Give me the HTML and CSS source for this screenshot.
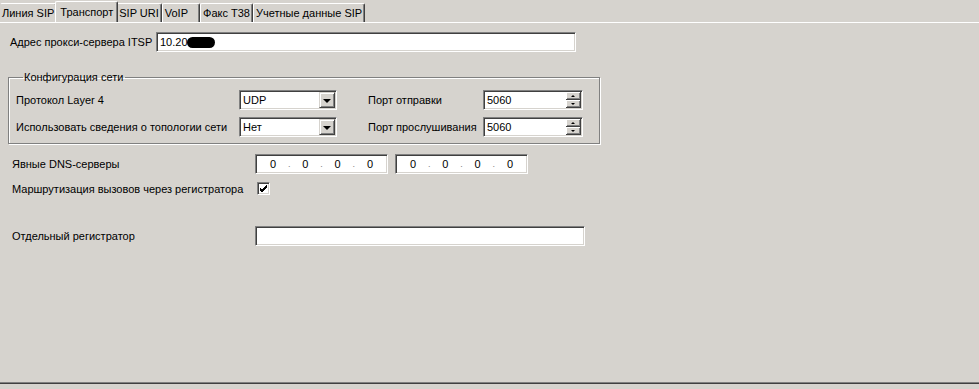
FILE: index.html
```html
<!DOCTYPE html>
<html>
<head>
<meta charset="utf-8">
<link rel="stylesheet" href="styles.css">
</head>
<body>
<div class="window">
  <div class="tabs">
    <div class="tab">Линия SIP</div>
    <div class="tab active">Транспорт</div>
    <div class="tab">SIP URI</div>
    <div class="tab tab-voip">VoIP</div>
    <div class="tab">Факс T38</div>
    <div class="tab">Учетные данные SIP</div>
  </div>
  <div class="panel">
    <div class="row proxy-row">
      <span class="lbl proxy-lbl">Адрес прокси-сервера ITSP</span>
      <div class="field proxy-field"><span class="val">10.20</span><span class="blot"></span></div>
    </div>

    <fieldset class="group">
      <legend>Конфигурация сети</legend>
      <div class="grid">
        <span class="lbl">Протокол Layer 4</span>
        <div class="field combo"><span class="val">UDP</span><span class="dropbtn"><span class="tri-down"></span></span></div>
        <span class="lbl port-lbl">Порт отправки</span>
        <div class="field spin"><span class="val">5060</span><span class="spinbtns"><span class="sbtn"><span class="tri-up"></span></span><span class="sbtn"><span class="tri-dn"></span></span></span></div>

        <span class="lbl">Использовать сведения о топологии сети</span>
        <div class="field combo"><span class="val">Нет</span><span class="dropbtn"><span class="tri-down"></span></span></div>
        <span class="lbl port-lbl">Порт прослушивания</span>
        <div class="field spin"><span class="val">5060</span><span class="spinbtns"><span class="sbtn"><span class="tri-up"></span></span><span class="sbtn"><span class="tri-dn"></span></span></span></div>
      </div>
    </fieldset>

    <div class="row dns-row">
      <span class="lbl wide-lbl">Явные DNS-серверы</span>
      <div class="field ip"><span>0</span><i>.</i><span>0</span><i>.</i><span>0</span><i>.</i><span>0</span></div>
      <div class="field ip"><span>0</span><i>.</i><span>0</span><i>.</i><span>0</span><i>.</i><span>0</span></div>
    </div>

    <div class="row chk-row">
      <span class="lbl chk-lbl">Маршрутизация вызовов через регистратора</span>
      <span class="checkbox"><svg width="9" height="9" viewBox="0 0 9 9"><path d="M1 4 L3 6 L8 1 M1 5 L3 7 L8 2 M1 6 L3 8 L8 3" stroke="#000" stroke-width="1" fill="none"/></svg></span>
    </div>

    <div class="row reg-row">
      <span class="lbl wide-lbl">Отдельный регистратор</span>
      <div class="field reg-field"></div>
    </div>
  </div>
</div>
</body>
</html>
```

FILE: styles.css
```css
html, body {
  margin: 0;
  padding: 0;
  background: #d6d3ce;
}
body {
  font-family: "Liberation Sans", Arial, sans-serif;
  font-size: 11px;
  color: #000;
  width: 979px;
  height: 389px;
  overflow: hidden;
}
.window {
  display: flex;
  flex-direction: column;
  height: 389px;
}
.tabs {
  display: flex;
  align-items: flex-end;
  height: 22px;
}
.tab {
  position: relative;
  box-sizing: border-box;
  height: 19px;
  line-height: 18px;
  padding: 0 2px;
  border-top: 1px solid #fff;
  border-left: 1px solid #fff;
  border-right: 1px solid #404040;
  box-shadow: inset -1px 0 0 #808080;
  border-radius: 2px 2px 0 0;
  white-space: nowrap;
}
.tab:first-child { border-left-color: #d6d3ce; padding-left: 1px; }
.tab.active {
  height: 21px;
  line-height: 20px;
  margin: 0 -2px;
  padding: 0 4px;
  z-index: 2;
  background: #d6d3ce;
}
.tab-voip { padding-right: 11px; }
.panel {
  flex: 1;
  border-top: 1px solid #fff;
  border-bottom: 1px solid #404040;
  box-shadow: inset 0 -1px 0 #808080;
  padding: 9px 0 0 8px;
  margin-bottom: 5px;
  display: flex;
  flex-direction: column;
  align-items: flex-start;
}
.row {
  display: flex;
  align-items: center;
}
.lbl { white-space: nowrap; }
.field {
  box-sizing: border-box;
  height: 20px;
  background: #fff;
  border-top: 1px solid #808080;
  border-left: 1px solid #808080;
  border-bottom: 1px solid #fff;
  border-right: 1px solid #fff;
  box-shadow: inset 1px 1px 0 #404040, inset -1px -1px 0 #d6d3ce;
  display: flex;
  align-items: center;
  position: relative;
}
.val { padding-left: 3px; line-height: 16px; }
.proxy-lbl { width: 148px; padding-left: 2px; box-sizing: border-box; }
.proxy-field { width: 420px; }
.blot {
  display: inline-block;
  width: 28px;
  height: 11px;
  background: #000;
  border-radius: 6px;
  margin-left: -1px;
}
.group {
  margin: 19px 0 0 0;
  padding: 6px 16px 6px 7px;
  width: 592px;
  box-sizing: border-box;
  border: 1px solid #808080;
  box-shadow: 1px 1px 0 #fff, inset 1px 1px 0 #fff;
}
.group legend {
  padding: 0 2px 0 1px;
  margin-left: 7px;
  line-height: 13px;
}
.grid {
  display: grid;
  grid-template-columns: 223px 98px 146px 100px;
  row-gap: 7px;
  align-items: center;
}
.port-lbl { padding-left: 31px; }
.combo, .spin { width: 100%; }
.dropbtn {
  position: absolute;
  right: 1px;
  top: 1px;
  width: 16px;
  height: 16px;
  box-sizing: border-box;
  background: #d6d3ce;
  border-top: 1px solid #d6d3ce;
  border-left: 1px solid #d6d3ce;
  border-right: 1px solid #404040;
  border-bottom: 1px solid #404040;
  box-shadow: inset 1px 1px 0 #fff, inset -1px -1px 0 #808080;
  display: flex;
  align-items: center;
  justify-content: center;
}
.tri-down {
  width: 0; height: 0;
  border-left: 4px solid transparent;
  border-right: 4px solid transparent;
  border-top: 4px solid #000;
  margin-top: 1px;
}
.spinbtns {
  position: absolute;
  right: 1px;
  top: 1px;
  width: 15px;
  height: 16px;
  display: flex;
  flex-direction: column;
}
.sbtn {
  flex: 1;
  box-sizing: border-box;
  background: #d6d3ce;
  border-right: 1px solid #404040;
  border-bottom: 1px solid #404040;
  box-shadow: inset 1px 1px 0 #fff, inset -1px -1px 0 #808080;
  display: flex;
  align-items: center;
  justify-content: center;
}
.tri-up {
  width: 0; height: 0;
  border-left: 2px solid transparent;
  border-right: 2px solid transparent;
  border-bottom: 2px solid #000;
}
.tri-dn {
  width: 0; height: 0;
  border-left: 2px solid transparent;
  border-right: 2px solid transparent;
  border-top: 2px solid #000;
}
.wide-lbl { width: 247px; padding-left: 4px; box-sizing: border-box; }
.dns-row { margin-top: 10px; }
.ip {
  width: 133px;
  justify-content: space-between;
  padding: 0 12px;
}
.ip + .ip { margin-left: 7px; }
.ip span { width: 10px; text-align: center; }
.ip i { font-style: normal; color: #808080; font-size: 9px; }
.chk-row { margin-top: 8px; }
.chk-lbl { width: 249px; padding-left: 4px; box-sizing: border-box; }
.checkbox {
  width: 13px;
  height: 13px;
  box-sizing: border-box;
  background: #fff;
  border-top: 1px solid #808080;
  border-left: 1px solid #808080;
  border-bottom: 1px solid #fff;
  border-right: 1px solid #fff;
  box-shadow: inset 1px 1px 0 #404040, inset -1px -1px 0 #d6d3ce;
  display: flex;
  align-items: center;
  justify-content: center;
}
.reg-row { margin-top: 31px; }
.reg-field { width: 330px; }
```
